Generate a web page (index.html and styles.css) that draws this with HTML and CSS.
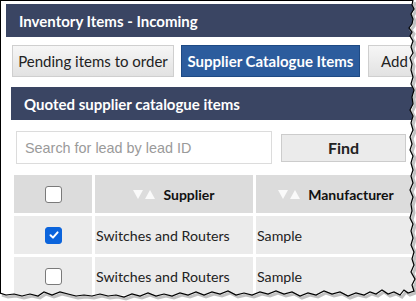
FILE: index.html
```html
<!DOCTYPE html>
<html>
<head>
<meta charset="utf-8">
<link rel="stylesheet" href="styles.css">
</head>
<body>
<div class="frame">
  <div class="page-title">Inventory Items - Incoming</div>
  <div class="tabs">
    <div class="tab">Pending items to order</div>
    <div class="tab active">Supplier Catalogue Items</div>
    <div class="tab add">Add</div>
  </div>
  <div class="section-title">Quoted supplier catalogue items</div>
  <div class="search-row">
    <div class="search-input">Search for lead by lead ID</div>
    <div class="find-btn">Find</div>
  </div>
  <div class="grid">
    <div class="th"><span class="cb"></span></div>
    <div class="th"><svg class="sort" width="22" height="11" viewBox="0 0 22 11"><path d="M0 1H10L5 10Z" fill="#fafafa"/><path d="M12 10H22L17 1Z" fill="#fafafa"/></svg>Supplier</div>
    <div class="th"><svg class="sort" width="22" height="11" viewBox="0 0 22 11"><path d="M0 1H10L5 10Z" fill="#fafafa"/><path d="M12 10H22L17 1Z" fill="#fafafa"/></svg>Manufacturer</div>

    <div class="td center"><span class="cb checked"><svg width="12" height="12" viewBox="0 0 12 12"><path d="M2.5 6.2L5 8.6L9.6 3.4" fill="none" stroke="#fff" stroke-width="2" stroke-linecap="round" stroke-linejoin="round"/></svg></span></div>
    <div class="td">Switches and Routers</div>
    <div class="td">Sample</div>

    <div class="td center"><span class="cb"></span></div>
    <div class="td">Switches and Routers</div>
    <div class="td">Sample</div>
  </div>
</div>
<svg class="tear" width="416" height="301" viewBox="0 0 416 301">
  <path class="tear-fill" d="M413 0 L412 5 L414 9 L411 14 L413 19 L412 24 L409 28 L412 32 L410 36 L413 41 L411 47 L413 53 L410 58 L412 64 L411 70 L413 77 L411 84 L414 90 L412 97 L413 104 L410 110 L413 116 L411 123 L413 130 L410 137 L412 144 L410 150 L413 156 L411 163 L413 170 L411 176 L413 183 L410 190 L413 197 L411 204 L412 211 L410 218 L413 224 L411 231 L413 238 L411 245 L414 252 L412 259 L414 265 L411 272 L415 279 L412 285 L414 291 L408 293 L404 290 L400 295 L394 292 L388 294 L382 290 L376 294 L370 292 L364 295 L356 293 L348 296 L340 292 L332 294 L324 291 L316 295 L308 293 L300 296 L292 292 L284 294 L276 291 L268 294 L260 292 L252 295 L244 293 L236 295 L228 291 L220 294 L212 292 L204 295 L196 292 L188 295 L180 293 L172 296 L164 294 L156 296 L148 293 L140 296 L132 294 L124 297 L116 295 L108 296 L100 294 L92 296 L84 295 L76 296 L68 294 L60 292 L52 295 L44 292 L38 296 L30 294 L22 296 L14 294 L6 295 L0 293 L0 301 L416 301 L416 0 Z"/>
  <path class="tear-shadow" d="M413 0 L412 5 L414 9 L411 14 L413 19 L412 24 L409 28 L412 32 L410 36 L413 41 L411 47 L413 53 L410 58 L412 64 L411 70 L413 77 L411 84 L414 90 L412 97 L413 104 L410 110 L413 116 L411 123 L413 130 L410 137 L412 144 L410 150 L413 156 L411 163 L413 170 L411 176 L413 183 L410 190 L413 197 L411 204 L412 211 L410 218 L413 224 L411 231 L413 238 L411 245 L414 252 L412 259 L414 265 L411 272 L415 279 L412 285 L414 291 L408 293 L404 290 L400 295 L394 292 L388 294 L382 290 L376 294 L370 292 L364 295 L356 293 L348 296 L340 292 L332 294 L324 291 L316 295 L308 293 L300 296 L292 292 L284 294 L276 291 L268 294 L260 292 L252 295 L244 293 L236 295 L228 291 L220 294 L212 292 L204 295 L196 292 L188 295 L180 293 L172 296 L164 294 L156 296 L148 293 L140 296 L132 294 L124 297 L116 295 L108 296 L100 294 L92 296 L84 295 L76 296 L68 294 L60 292 L52 295 L44 292 L38 296 L30 294 L22 296 L14 294 L6 295 L0 293"/>
  <path class="tear-edge" d="M413 0 L412 5 L414 9 L411 14 L413 19 L412 24 L409 28 L412 32 L410 36 L413 41 L411 47 L413 53 L410 58 L412 64 L411 70 L413 77 L411 84 L414 90 L412 97 L413 104 L410 110 L413 116 L411 123 L413 130 L410 137 L412 144 L410 150 L413 156 L411 163 L413 170 L411 176 L413 183 L410 190 L413 197 L411 204 L412 211 L410 218 L413 224 L411 231 L413 238 L411 245 L414 252 L412 259 L414 265 L411 272 L415 279 L412 285 L414 291 L408 293 L404 290 L400 295 L394 292 L388 294 L382 290 L376 294 L370 292 L364 295 L356 293 L348 296 L340 292 L332 294 L324 291 L316 295 L308 293 L300 296 L292 292 L284 294 L276 291 L268 294 L260 292 L252 295 L244 293 L236 295 L228 291 L220 294 L212 292 L204 295 L196 292 L188 295 L180 293 L172 296 L164 294 L156 296 L148 293 L140 296 L132 294 L124 297 L116 295 L108 296 L100 294 L92 296 L84 295 L76 296 L68 294 L60 292 L52 295 L44 292 L38 296 L30 294 L22 296 L14 294 L6 295 L0 293"/>
</svg>
</body>
</html>
```

FILE: styles.css
```css
html, body {
  margin: 0;
  padding: 0;
  background: #fff;
}
body {
  width: 416px;
  height: 301px;
  overflow: hidden;
  position: relative;
  font-family: Lato, "Open Sans", sans-serif;
  color: #222;
}
.frame {
  border-left: 1px solid #000;
  border-top: 1px solid #000;
  width: 416px;
  height: 301px;
  padding: 3px 0 0 5px;
  box-sizing: border-box;
  overflow: hidden;
}
.page-title {
  height: 33px;
  background: #3a4563;
  color: #fff;
  font-weight: 700;
  font-size: 15px;
  display: flex;
  align-items: center;
  padding-left: 13px;
  white-space: nowrap;
}
.tabs {
  display: flex;
  margin: 8px 0 0 6px;
}
.tab {
  flex-shrink: 0;
  white-space: nowrap;
  height: 32px;
  box-sizing: border-box;
  border: 1px solid #cfcfcf;
  background: linear-gradient(#f6f6f6, #e2e2e2);
  font-size: 15px;
  color: #222;
  display: flex;
  align-items: center;
  justify-content: center;
  width: 162px;
  margin-right: 7px;
}
.tab.active {
  width: 179px;
  background: #2c5c9d;
  border-color: #1e4a84;
  color: #fff;
  font-weight: 700;
  margin-right: 8px;
}
.tab.add {
  width: 110px;
  justify-content: flex-start;
  padding-left: 12px;
}
.section-title {
  margin: 10px 0 0 5px;
  height: 33px;
  background: #3a4563;
  color: #fff;
  font-weight: 700;
  font-size: 15px;
  display: flex;
  align-items: center;
  padding-left: 13px;
  white-space: nowrap;
}
.search-row {
  display: flex;
  align-items: center;
  margin: 11px 0 0 10px;
}
.search-input {
  flex-shrink: 0;
  width: 256px;
  height: 33px;
  box-sizing: border-box;
  border: 1px solid #dcdcdc;
  background: #fff;
  color: #9a9a9a;
  font-family: "Liberation Sans", Arial, sans-serif;
  font-size: 14.4px;
  display: flex;
  align-items: center;
  padding-left: 8px;
  white-space: nowrap;
}
.find-btn {
  flex-shrink: 0;
  margin-left: 9px;
  width: 125px;
  height: 28px;
  box-sizing: border-box;
  border: 1px solid #cccccc;
  background: #ebebeb;
  font-weight: 700;
  font-size: 16px;
  color: #222;
  display: flex;
  align-items: center;
  justify-content: center;
}
.grid {
  display: grid;
  grid-template-columns: 78px 158px 160px;
  grid-auto-rows: 38px;
  gap: 3px;
  margin: 11px 0 0 8px;
}
.th {
  background: #dcdcdc;
  font-weight: 700;
  font-size: 14px;
  color: #111;
  display: flex;
  align-items: center;
  justify-content: center;
  white-space: nowrap;
}
.sort {
  margin-right: 8px;
}
.td {
  background: #ebebeb;
  font-size: 14.2px;
  color: #222;
  display: flex;
  align-items: center;
  padding-left: 1px;
  white-space: nowrap;
}
.td.center {
  justify-content: center;
  padding-left: 0;
}
.cb {
  width: 17px;
  height: 17px;
  box-sizing: border-box;
  border: 1px solid #7a7a7a;
  border-radius: 3px;
  background: #fff;
  display: inline-flex;
  align-items: center;
  justify-content: center;
  margin-left: 1px;
}
.cb.checked {
  background: #0b64dc;
  border-color: #0b64dc;
}
.tear {
  position: absolute;
  left: 0;
  top: 0;
}
.tear-fill {
  fill: #fff;
  stroke: none;
}
.tear-shadow {
  fill: none;
  stroke: #9a9a9a;
  stroke-width: 3;
  transform: translate(2px, 2px);
  opacity: 0.6;
}
.tear-edge {
  fill: none;
  stroke: #000;
  stroke-width: 1.2;
}
```
